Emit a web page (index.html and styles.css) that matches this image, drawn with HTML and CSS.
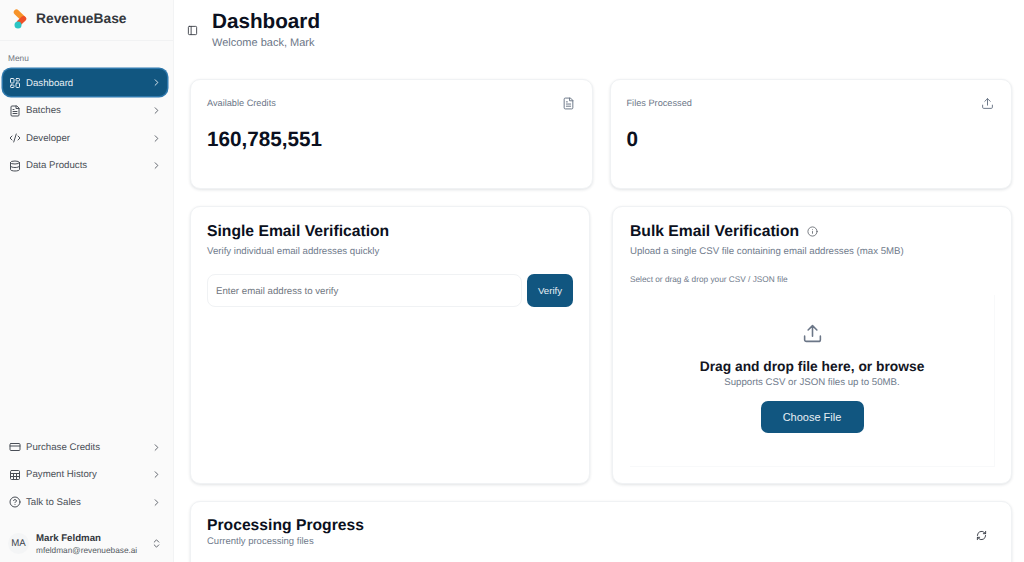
FILE: index.html
```html
<!DOCTYPE html>
<html lang="en">
<head>
<meta charset="utf-8">
<title>RevenueBase Dashboard</title>
<link rel="stylesheet" href="styles.css">
</head>
<body>
<div class="app">
  <aside class="sidebar">
    <div class="brand">
      <svg class="logo" width="14" height="20" viewBox="0 0 14 20"><path class="logo-o" d="M3.500 3.200 10 9.500"/><path class="logo-r" d="M10.500 9.800 6.500 13.500"/><circle class="logo-t" cx="5" cy="16" r="3.500"/></svg>
      <span class="brand-name">RevenueBase</span>
    </div>
    <div class="menu-label">Menu</div>
    <nav class="nav nav-top">
      <a class="nav-item active">
        <svg class="ic" viewBox="0 0 24 24"><rect x="3" y="3" width="7" height="9" rx="1.5"/><rect x="14" y="3" width="7" height="5" rx="1.5"/><rect x="14" y="12" width="7" height="9" rx="1.5"/><rect x="3" y="16" width="7" height="5" rx="1.5"/></svg>
        <span>Dashboard</span>
        <svg class="chev" viewBox="0 0 24 24"><path d="m9 18 6-6-6-6"/></svg>
      </a>
      <a class="nav-item">
        <svg class="ic" viewBox="0 0 24 24"><path d="M15 2H6a2 2 0 0 0-2 2v16a2 2 0 0 0 2 2h12a2 2 0 0 0 2-2V7z"/><path d="M14 2v5h6M16 13H8M16 17H8M10 9H8"/></svg>
        <span>Batches</span>
        <svg class="chev" viewBox="0 0 24 24"><path d="m9 18 6-6-6-6"/></svg>
      </a>
      <a class="nav-item">
        <svg class="ic" viewBox="0 0 24 24"><path d="m18 16 4-4-4-4M6 8l-4 4 4 4M14.500 4l-5 16"/></svg>
        <span>Developer</span>
        <svg class="chev" viewBox="0 0 24 24"><path d="m9 18 6-6-6-6"/></svg>
      </a>
      <a class="nav-item">
        <svg class="ic" viewBox="0 0 24 24"><ellipse cx="12" cy="5" rx="9" ry="3"/><path d="M3 5v14c0 1.700 4 3 9 3s9-1.300 9-3V5"/><path d="M3 12c0 1.700 4 3 9 3s9-1.300 9-3"/></svg>
        <span>Data Products</span>
        <svg class="chev" viewBox="0 0 24 24"><path d="m9 18 6-6-6-6"/></svg>
      </a>
    </nav>
    <nav class="nav nav-bottom">
      <a class="nav-item">
        <svg class="ic" viewBox="0 0 24 24"><rect x="2" y="5" width="20" height="14" rx="2"/><path d="M2 10h20"/></svg>
        <span>Purchase Credits</span>
        <svg class="chev" viewBox="0 0 24 24"><path d="m9 18 6-6-6-6"/></svg>
      </a>
      <a class="nav-item">
        <svg class="ic" viewBox="0 0 24 24"><rect x="3" y="3" width="18" height="18" rx="2"/><path d="M3 9h18M3 15h18M9 9v12M15 9v12"/></svg>
        <span>Payment History</span>
        <svg class="chev" viewBox="0 0 24 24"><path d="m9 18 6-6-6-6"/></svg>
      </a>
      <a class="nav-item">
        <svg class="ic" viewBox="0 0 24 24"><circle cx="12" cy="12" r="10"/><path d="M9.100 9a3 3 0 0 1 5.800 1c0 2-3 3-3 3M12 17h.01"/></svg>
        <span>Talk to Sales</span>
        <svg class="chev" viewBox="0 0 24 24"><path d="m9 18 6-6-6-6"/></svg>
      </a>
    </nav>
    <div class="user">
      <div class="avatar">MA</div>
      <div class="user-info">
        <div class="user-name">Mark Feldman</div>
        <div class="user-mail">mfeldman@revenuebase.ai</div>
      </div>
      <svg class="updown" viewBox="0 0 24 24"><path d="m7 15 5 5 5-5M7 9l5-5 5 5"/></svg>
    </div>
  </aside>
  <main class="main">
    <header class="header">
      <svg class="toggle" viewBox="0 0 24 24"><rect x="3" y="3" width="18" height="18" rx="2"/><path d="M9 3v18"/></svg>
      <div>
        <h1 class="title">Dashboard</h1>
        <p class="welcome">Welcome back, Mark</p>
      </div>
    </header>
    <section class="stats">
      <div class="card stat">
        <div class="stat-top">
          <span class="stat-label">Available Credits</span>
          <svg class="stat-ic" viewBox="0 0 24 24"><path d="M15 2H6a2 2 0 0 0-2 2v16a2 2 0 0 0 2 2h12a2 2 0 0 0 2-2V7z"/><path d="M14 2v5h6M16 13H8M16 17H8M10 9H8"/></svg>
        </div>
        <div class="stat-value">160,785,551</div>
      </div>
      <div class="card stat">
        <div class="stat-top">
          <span class="stat-label">Files Processed</span>
          <svg class="stat-ic" viewBox="0 0 24 24"><path d="M21 15v4a2 2 0 0 1-2 2H5a2 2 0 0 1-2-2v-4M17 8l-5-5-5 5M12 3v12"/></svg>
        </div>
        <div class="stat-value">0</div>
      </div>
    </section>
    <section class="tools">
      <div class="card tool">
        <h2 class="card-title">Single Email Verification</h2>
        <p class="card-sub">Verify individual email addresses quickly</p>
        <div class="verify-row">
          <div class="input">Enter email address to verify</div>
          <button class="btn btn-verify">Verify</button>
        </div>
      </div>
      <div class="card tool tool-bulk">
        <h2 class="card-title">Bulk Email Verification
          <svg class="info" viewBox="0 0 24 24"><circle cx="12" cy="12" r="10"/><path d="M12 16v-4M12 8h.01"/></svg>
        </h2>
        <p class="card-sub">Upload a single CSV file containing email addresses (max 5MB)</p>
        <p class="drop-label">Select or drag &amp; drop your CSV / JSON file</p>
        <div class="dropzone">
          <svg class="drop-ic" viewBox="0 0 24 24"><path d="M21 15v4a2 2 0 0 1-2 2H5a2 2 0 0 1-2-2v-4M17 8l-5-5-5 5M12 3v12"/></svg>
          <div class="drop-title">Drag and drop file here, or browse</div>
          <div class="drop-sub">Supports CSV or JSON files up to 50MB.</div>
          <button class="btn btn-file">Choose File</button>
        </div>
      </div>
    </section>
    <section class="card progress">
      <div>
        <h2 class="card-title tight">Processing Progress</h2>
        <p class="progress-sub">Currently processing files</p>
      </div>
      <svg class="refresh" viewBox="0 0 24 24"><path d="M3 12a9 9 0 0 1 15-6.700L21 8M21 3v5h-5M21 12a9 9 0 0 1-15 6.700L3 16M3 21v-5h5"/></svg>
    </section>
  </main>
</div>
</body>
</html>
```
FILE: styles.css
```css
* { box-sizing: border-box; }
html, body { margin: 0; height: 562px; overflow: hidden; }
body { font-family: "Liberation Sans", Arial, sans-serif; background: #fff; color: #0b1020; text-rendering: geometricPrecision; }
svg { fill: none; stroke: currentColor; stroke-width: 2; stroke-linecap: round; stroke-linejoin: round; display: block; flex: none; }
h1, h2, p { margin: 0; }
.app { display: flex; height: 562px; overflow: hidden; }

.sidebar { width: 174px; flex: none; background: #fafafa; border-right: 1px solid #f2f3f4; display: flex; flex-direction: column; }
.brand { height: 41px; display: flex; align-items: center; gap: 9px; padding: 0 0 3px 13px; border-bottom: 1px solid #f1f2f3; }
.logo-o { stroke: #f6932a; stroke-width: 5.500; }
.logo-r { stroke: #ef4f27; stroke-width: 5.500; }
.logo-t { fill: #2cc5c4; stroke: none; }
.brand-name { font-size: 13.800px; font-weight: 700; color: #33373d; }
.menu-label { font-size: 8.300px; color: #70757d; margin: 12px 0 0 8px; height: 11px; line-height: 11px; }
.nav { display: flex; flex-direction: column; padding: 0 6px 0 3px; }
.nav-top { margin-top: 5px; }
.nav-bottom { margin-top: auto; }
.nav-item { height: 27.500px; display: flex; align-items: center; padding: 0 5px 0 6px; gap: 5px; font-size: 9.660px; color: #494e56; }
.nav-item span { flex: 1; }
.nav-item .ic { width: 12px; height: 12px; stroke-width: 2; }
.chev { width: 11px; height: 11px; stroke-width: 2; color: #555a62; }
.nav-item.active { height: 27px; margin-bottom: 1px; background: #115680; color: #e8eff4; border-radius: 8px; box-shadow: 0 0 0 1.500px #2f79ad; }
.nav-item.active span { padding-top: 1px; }
.nav-item.active .chev { color: #e8eff4; }
.user { display: flex; align-items: center; height: 44px; margin-top: 2px; padding: 6px 11px 0 8px; }
.avatar { width: 21px; height: 21px; font-size: 9.660px; color: #41464e; background: #f4f5f6; border-radius: 50%; display: flex; align-items: center; justify-content: center; flex: none; }
.user-info { flex: 1; margin-left: 7px; padding-top: 3px; }
.user-name { font-size: 9.660px; font-weight: 700; color: #33373d; line-height: 12px; }
.user-mail { font-size: 8.280px; color: #555a62; line-height: 11px; }
.updown { width: 11px; height: 11px; color: #555a62; }

.main { flex: 1; min-width: 0; padding: 0 12px 0 16px; }
.header { display: flex; align-items: center; height: 79px; padding-bottom: 20px; gap: 14px; margin-left: -3px; }
.toggle { width: 11px; height: 11px; color: #3d4249; margin-top: 1px; }
.title { font-size: 20.700px; line-height: 25px; font-weight: 700; color: #0b1020; }
.welcome { font-size: 11px; line-height: 14px; color: #6b7687; margin-top: 2px; }

.card { background: #fff; border: 1px solid #f0f2f4; border-radius: 10px; box-shadow: 0 1px 3px rgba(20,30,50,.12); }
.stats { display: grid; grid-template-columns: 1fr 1fr; gap: 17px; }
.stat { height: 110px; padding: 16px 17px 0 16px; }
.stat-top { display: flex; justify-content: space-between; align-items: center; height: 14px; }
.stat-label { font-size: 9.200px; color: #6b7687; }
.stat-ic { width: 13px; height: 13px; color: #6b7687; stroke-width: 1.800; }
.stat-value { font-size: 20.700px; font-weight: 700; line-height: 26px; margin-top: 17px; color: #0b1020; }

.tools { display: grid; grid-template-columns: 1fr 1fr; gap: 22px; margin-top: 17px; }
.tool { height: 278px; padding: 15px 16px 0; }
.tool-bulk { padding-left: 17px; }
.card-title { font-size: 15.700px; line-height: 19px; font-weight: 700; color: #0b1020; display: flex; align-items: center; gap: 8px; }
.card-sub { font-size: 9.660px; line-height: 12px; color: #707b8c; margin-top: 5px; }
.info { width: 11px; height: 11px; color: #555a62; stroke-width: 1.700; }
.verify-row { display: flex; gap: 5px; margin-top: 16px; height: 33px; }
.input { flex: 1; border: 1px solid #f0f2f4; border-radius: 8px; font-size: 9.660px; color: #707680; padding: 1px 8px 0; display: flex; align-items: center; }
.btn { border: 0; background: #115680; color: #e8eff4; font-family: inherit; border-radius: 7px; }
.btn-verify { width: 46px; font-size: 9.660px; }
.drop-label { font-size: 8.280px; line-height: 10px; color: #707b8c; margin-top: 17px; }
.dropzone { display: flex; flex-direction: column; align-items: center; height: 172px; margin-top: 10px; padding-top: 28px; border-right: 1px solid #f8f9fa; border-bottom: 1px solid #f8f9fa; }
.drop-ic { width: 21px; height: 21px; color: #6b7687; stroke-width: 1.800; }
.drop-title { font-size: 13.800px; line-height: 17px; font-weight: 700; color: #14161f; margin-top: 14px; }
.drop-sub { font-size: 9.660px; line-height: 12px; color: #707b8c; margin-top: 2px; }
.btn-file { width: 103px; height: 32px; font-size: 11px; margin-top: 12px; }

.progress { display: flex; justify-content: space-between; align-items: flex-start; margin-top: 17px; height: 100px; padding: 15px 24px 0 16px; }
.tight { line-height: 18px; }
.progress-sub { font-size: 9.500px; line-height: 11px; color: #707b8c; margin-top: 1px; }
.refresh { width: 11px; height: 11px; color: #333842; margin-top: 13px; }
```
